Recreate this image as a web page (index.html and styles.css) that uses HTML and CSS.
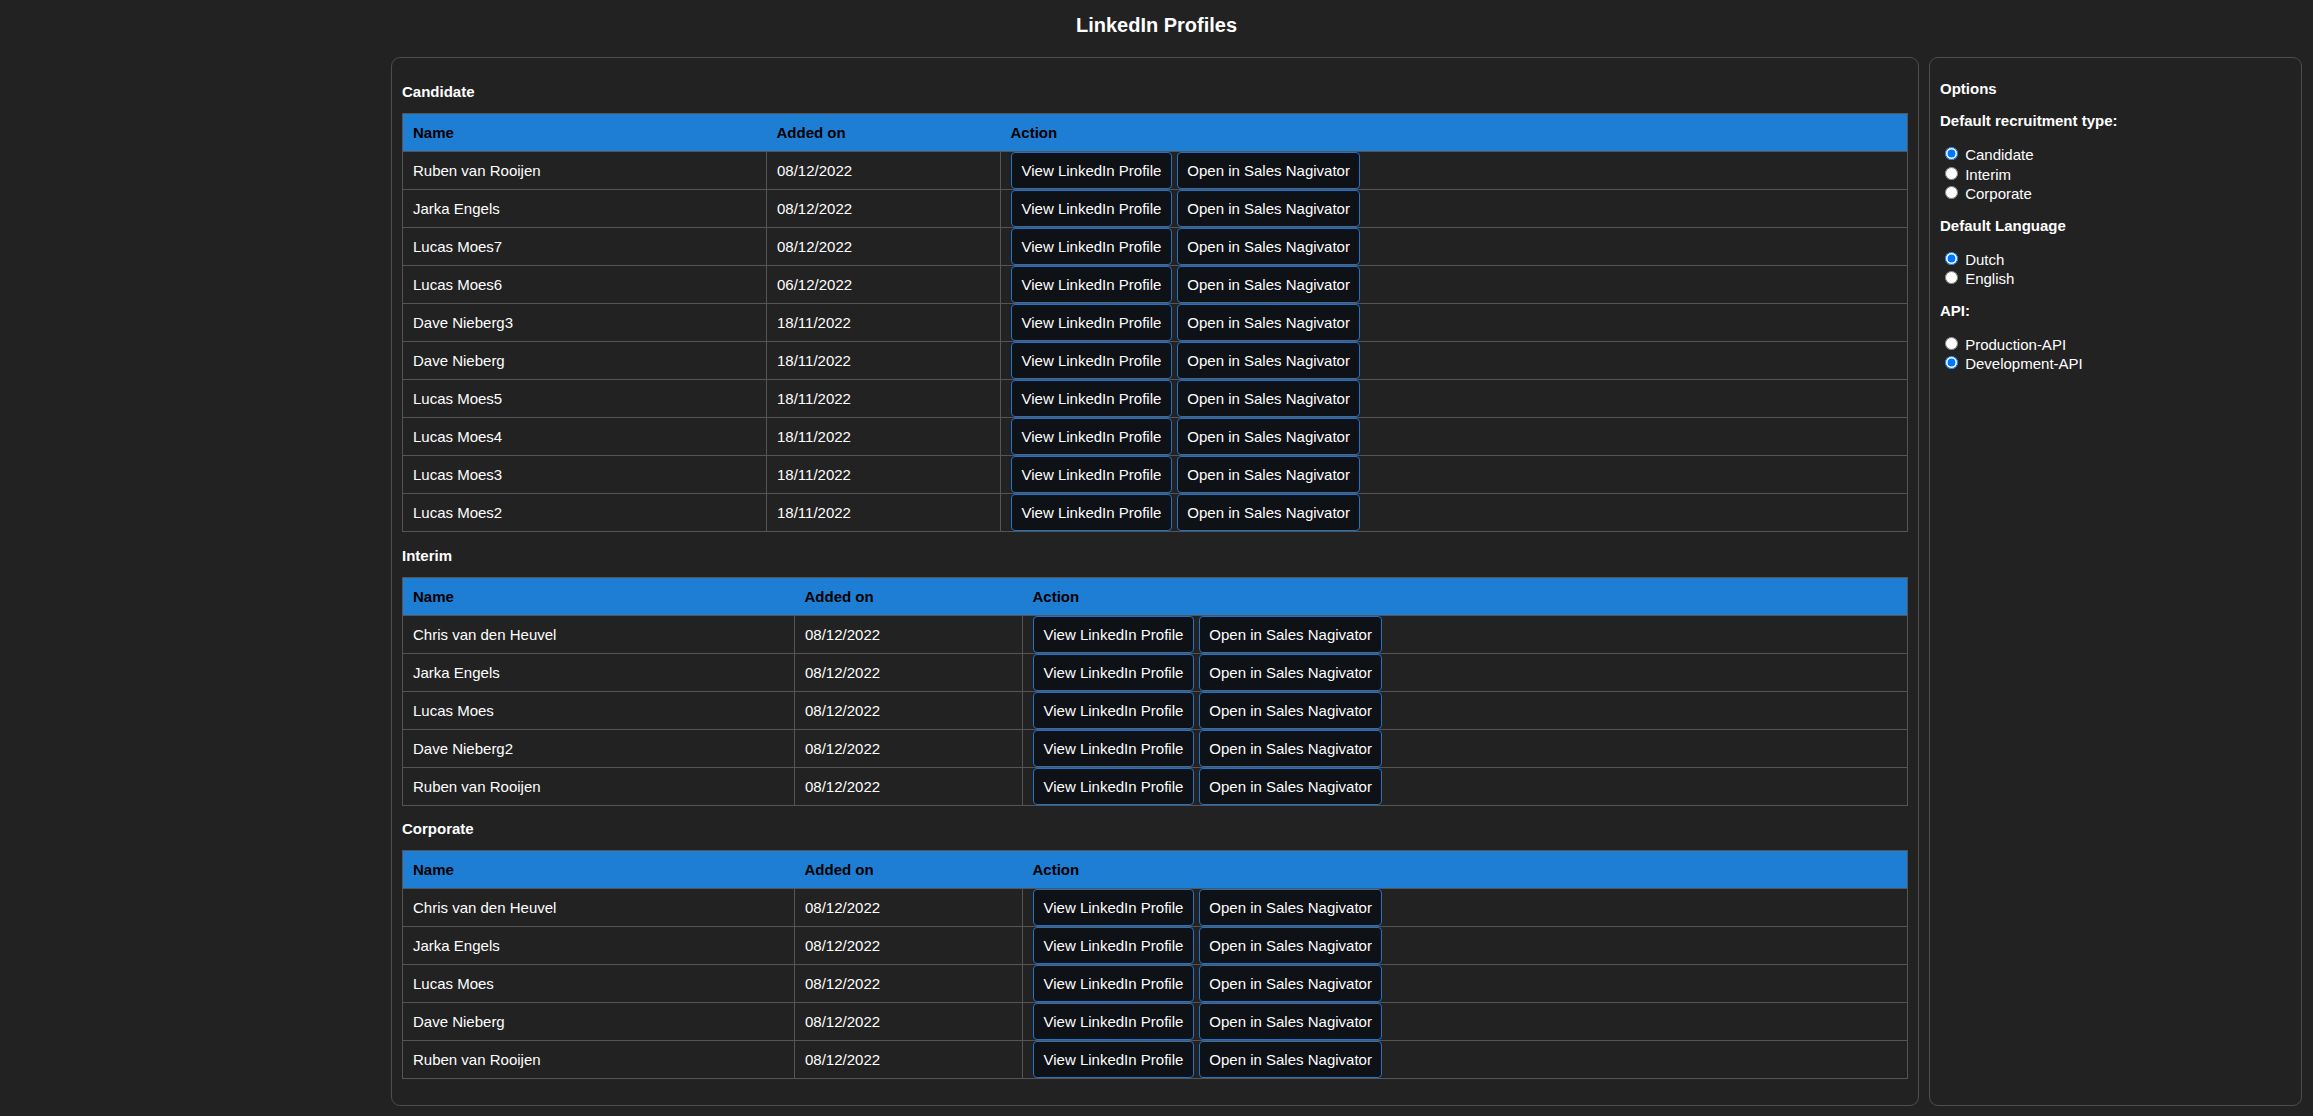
FILE: index.html
```html
<!DOCTYPE html>
<html lang="en">
<head>
<meta charset="utf-8">
<title>LinkedIn Profiles</title>
<link rel="stylesheet" href="styles.css">
</head>
<body>
<h1 class="page-title">LinkedIn Profiles</h1>
<main class="layout">
  <section class="panel panel-main">
    <h2 class="section-title">Candidate</h2>
    <table class="profiles">
      <colgroup><col class="c-name-a"><col class="c-date-a"><col></colgroup>
      <thead><tr><th>Name</th><th>Added on</th><th>Action</th></tr></thead>
      <tbody>
        <tr><td>Ruben van Rooijen</td><td>08/12/2022</td><td class="act"><div class="actions"><button class="btn">View LinkedIn Profile</button><button class="btn">Open in Sales Nagivator</button></div></td></tr>
        <tr><td>Jarka Engels</td><td>08/12/2022</td><td class="act"><div class="actions"><button class="btn">View LinkedIn Profile</button><button class="btn">Open in Sales Nagivator</button></div></td></tr>
        <tr><td>Lucas Moes7</td><td>08/12/2022</td><td class="act"><div class="actions"><button class="btn">View LinkedIn Profile</button><button class="btn">Open in Sales Nagivator</button></div></td></tr>
        <tr><td>Lucas Moes6</td><td>06/12/2022</td><td class="act"><div class="actions"><button class="btn">View LinkedIn Profile</button><button class="btn">Open in Sales Nagivator</button></div></td></tr>
        <tr><td>Dave Nieberg3</td><td>18/11/2022</td><td class="act"><div class="actions"><button class="btn">View LinkedIn Profile</button><button class="btn">Open in Sales Nagivator</button></div></td></tr>
        <tr><td>Dave Nieberg</td><td>18/11/2022</td><td class="act"><div class="actions"><button class="btn">View LinkedIn Profile</button><button class="btn">Open in Sales Nagivator</button></div></td></tr>
        <tr><td>Lucas Moes5</td><td>18/11/2022</td><td class="act"><div class="actions"><button class="btn">View LinkedIn Profile</button><button class="btn">Open in Sales Nagivator</button></div></td></tr>
        <tr><td>Lucas Moes4</td><td>18/11/2022</td><td class="act"><div class="actions"><button class="btn">View LinkedIn Profile</button><button class="btn">Open in Sales Nagivator</button></div></td></tr>
        <tr><td>Lucas Moes3</td><td>18/11/2022</td><td class="act"><div class="actions"><button class="btn">View LinkedIn Profile</button><button class="btn">Open in Sales Nagivator</button></div></td></tr>
        <tr><td>Lucas Moes2</td><td>18/11/2022</td><td class="act"><div class="actions"><button class="btn">View LinkedIn Profile</button><button class="btn">Open in Sales Nagivator</button></div></td></tr>
      </tbody>
    </table>

    <h2 class="section-title">Interim</h2>
    <table class="profiles">
      <colgroup><col class="c-name-b"><col class="c-date-b"><col></colgroup>
      <thead><tr><th>Name</th><th>Added on</th><th>Action</th></tr></thead>
      <tbody>
        <tr><td>Chris van den Heuvel</td><td>08/12/2022</td><td class="act"><div class="actions"><button class="btn">View LinkedIn Profile</button><button class="btn">Open in Sales Nagivator</button></div></td></tr>
        <tr><td>Jarka Engels</td><td>08/12/2022</td><td class="act"><div class="actions"><button class="btn">View LinkedIn Profile</button><button class="btn">Open in Sales Nagivator</button></div></td></tr>
        <tr><td>Lucas Moes</td><td>08/12/2022</td><td class="act"><div class="actions"><button class="btn">View LinkedIn Profile</button><button class="btn">Open in Sales Nagivator</button></div></td></tr>
        <tr><td>Dave Nieberg2</td><td>08/12/2022</td><td class="act"><div class="actions"><button class="btn">View LinkedIn Profile</button><button class="btn">Open in Sales Nagivator</button></div></td></tr>
        <tr><td>Ruben van Rooijen</td><td>08/12/2022</td><td class="act"><div class="actions"><button class="btn">View LinkedIn Profile</button><button class="btn">Open in Sales Nagivator</button></div></td></tr>
      </tbody>
    </table>

    <h2 class="section-title">Corporate</h2>
    <table class="profiles">
      <colgroup><col class="c-name-b"><col class="c-date-b"><col></colgroup>
      <thead><tr><th>Name</th><th>Added on</th><th>Action</th></tr></thead>
      <tbody>
        <tr><td>Chris van den Heuvel</td><td>08/12/2022</td><td class="act"><div class="actions"><button class="btn">View LinkedIn Profile</button><button class="btn">Open in Sales Nagivator</button></div></td></tr>
        <tr><td>Jarka Engels</td><td>08/12/2022</td><td class="act"><div class="actions"><button class="btn">View LinkedIn Profile</button><button class="btn">Open in Sales Nagivator</button></div></td></tr>
        <tr><td>Lucas Moes</td><td>08/12/2022</td><td class="act"><div class="actions"><button class="btn">View LinkedIn Profile</button><button class="btn">Open in Sales Nagivator</button></div></td></tr>
        <tr><td>Dave Nieberg</td><td>08/12/2022</td><td class="act"><div class="actions"><button class="btn">View LinkedIn Profile</button><button class="btn">Open in Sales Nagivator</button></div></td></tr>
        <tr><td>Ruben van Rooijen</td><td>08/12/2022</td><td class="act"><div class="actions"><button class="btn">View LinkedIn Profile</button><button class="btn">Open in Sales Nagivator</button></div></td></tr>
      </tbody>
    </table>
  </section>

  <aside class="panel panel-side">
    <h3 class="opt-head">Options</h3>
    <h3 class="opt-head">Default recruitment type:</h3>
    <div class="opt-group">
      <div class="opt"><label><input type="radio" name="rtype" checked> Candidate</label></div>
      <div class="opt"><label><input type="radio" name="rtype"> Interim</label></div>
      <div class="opt"><label><input type="radio" name="rtype"> Corporate</label></div>
    </div>
    <h3 class="opt-head">Default Language</h3>
    <div class="opt-group">
      <div class="opt"><label><input type="radio" name="lang" checked> Dutch</label></div>
      <div class="opt"><label><input type="radio" name="lang"> English</label></div>
    </div>
    <h3 class="opt-head">API:</h3>
    <div class="opt-group">
      <div class="opt"><label><input type="radio" name="api"> Production-API</label></div>
      <div class="opt"><label><input type="radio" name="api" checked> Development-API</label></div>
    </div>
  </aside>
</main>
</body>
</html>
```

FILE: styles.css
```css
html, body {
  margin: 0;
  padding: 0;
  background: #222222;
}

body {
  font-family: "Liberation Sans", Arial, sans-serif;
  font-size: 15px;
  color: #ffffff;
}

.page-title {
  margin: 0;
  padding-top: 14px;
  font-size: 20px;
  line-height: 23px;
  font-weight: bold;
  text-align: center;
}

.layout {
  display: flex;
  align-items: stretch;
  gap: 10px;
  margin-top: 20px;
  padding: 0 11px 0 391px;
}

.panel {
  box-sizing: border-box;
  border: 1px solid #4d4d4d;
  border-radius: 9px;
  background: #222222;
}

.panel-main {
  flex: 0 0 1528px;
  padding: 10px 10px 26px 10px;
}

.panel-side {
  flex: 0 0 373px;
  padding: 7.5px 10px 10px 10px;
}

.section-title {
  margin: 14.5px 0 13px 0;
  font-size: 15px;
  line-height: 17px;
  font-weight: bold;
}

.panel-main .section-title:first-child {
  margin-top: 15px;
}

.profiles {
  width: 100%;
  border-collapse: collapse;
  table-layout: fixed;
  border: 1px solid #555555;
}

.c-name-a { width: 364px; }
.c-date-a { width: 234px; }
.c-name-b { width: 392px; }
.c-date-b { width: 228px; }

.profiles th {
  height: 37px;
  padding: 0 10px;
  background: #1e7ed4;
  color: #000000;
  font-weight: bold;
  text-align: left;
  border-top: 1px solid #555555;
  border-bottom: 1px solid #555555;
}

.profiles td {
  height: 37px;
  padding: 0 10px;
  border: 1px solid #555555;
  vertical-align: middle;
  white-space: nowrap;
}

.actions {
  display: flex;
  gap: 5px;
}

.btn {
  box-sizing: border-box;
  height: 37px;
  margin: 0;
  padding: 0 9.5px;
  font-family: "Liberation Sans", Arial, sans-serif;
  font-size: 15px;
  line-height: 35px;
  color: #ffffff;
  background: #0e1116;
  border: 1px solid #2372c6;
  border-radius: 4px;
  cursor: pointer;
}

.opt-head {
  margin: 14px 0 14px 0;
  font-size: 15px;
  line-height: 17px;
  font-weight: bold;
}

.panel-side .opt-head:first-child {
  margin-top: 14.5px;
}

.panel-side .opt-head:nth-child(2) {
  margin-top: 15px;
}

.opt-group {
  margin: 15px 0 0 0;
}

.opt {
  height: 19.5px;
  font-size: 15px;
}

.opt input {
  margin: 3px 3px 0 5px;
}
```
